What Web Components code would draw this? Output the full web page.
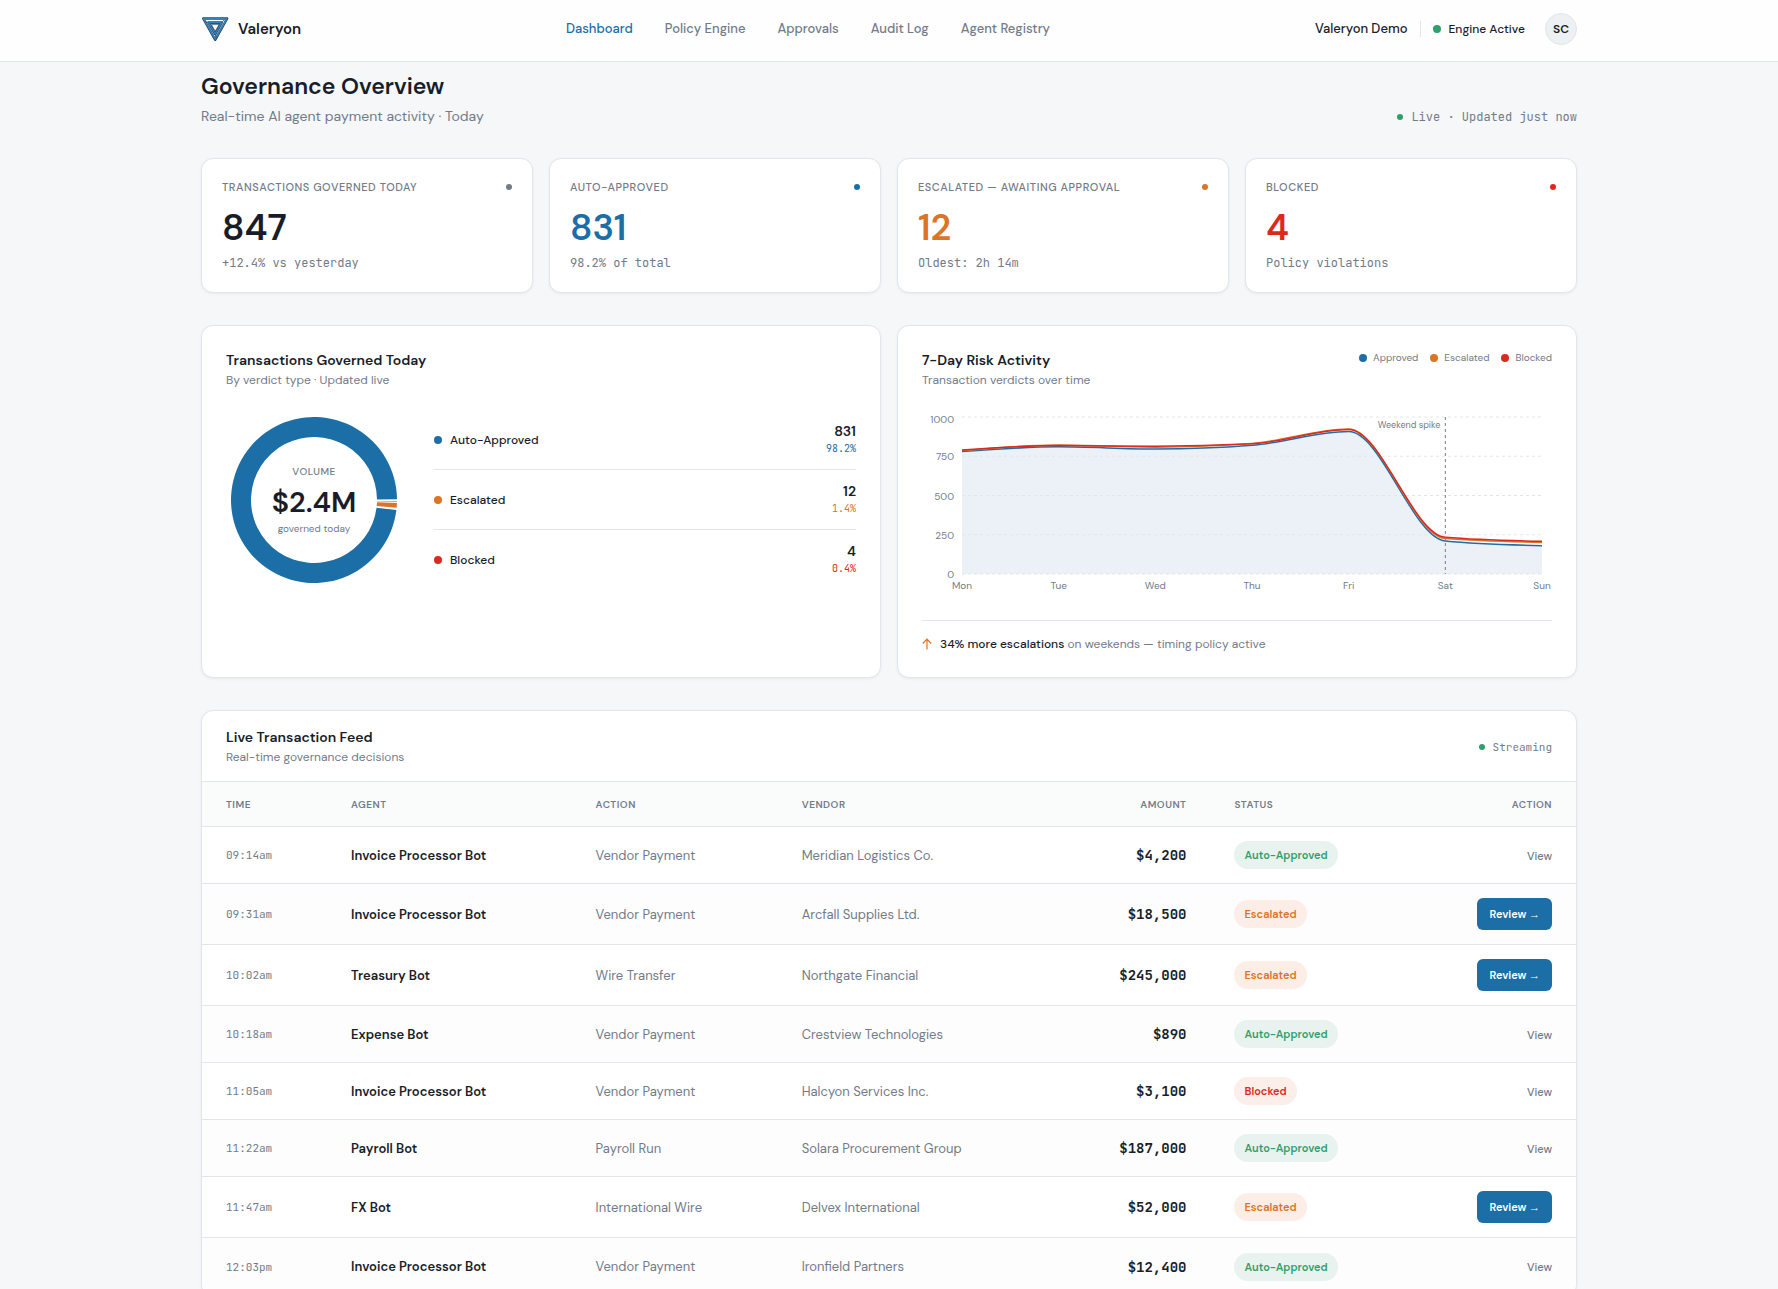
<!DOCTYPE html>
<html lang="en">
<head>
<meta charset="utf-8">
<title>Valeryon - Governance Overview</title>
<meta name="viewport" content="width=device-width, initial-scale=1">
<style>
:root {
  --ink: #181d29;
  --muted: #727b89;
  --line: #e2e6ea;
  --blue: #1c6ea7;
  --orange: #dc7427;
  --red: #dc291e;
  --green: #319e6b;
  --sans: "DM Sans", Inter, sans-serif;
  --mono: "JetBrains Mono", "DejaVu Sans Mono", monospace;
}

body {
  margin: 0;
  background: #f5f7f9;
  color: var(--ink);
  font-family: var(--sans);
  font-size: 14px;
}
</style>
</head>
<body>
<val-app></val-app>

<script>
function define (name, html, setup) {
  const template = document.createElement('template');
  template.innerHTML = html;

  customElements.define(name, class extends HTMLElement {
    constructor() {
      super();
      this.attachShadow({mode: 'open'});
      this.shadowRoot.appendChild(template.content.cloneNode(true));
    }

    connectedCallback() {
      if (setup && !this._ready) {
        this._ready = true;
        setup(this, this.shadowRoot);
      }
    }
  });
}

define('status-dot', `
<style>
:host {
  display: inline-block;
  flex: none;
  width: 6px;
  height: 6px;
  border-radius: 50%;
  background: var(--dot, var(--green));
}

:host([size="md"]) {
  width: 8px;
  height: 8px;
}
</style>
`);

define('val-logo', `
<style>
:host {
  display: flex;
  align-items: center;
  gap: 9px;
  font-size: 15px;
  line-height: 20px;
  font-weight: 600;
}

svg {
  display: block;
}
</style>
<svg width="28" height="28" viewBox="0 0 28 28" fill="none" stroke-linejoin="round" aria-hidden="true">
  <path d="M2.200 3.500H26.200L14.200 24.800Z" fill="#fff" stroke="#2f4257" stroke-width="2.400"/>
  <path d="M2.600 3.800H25.800L14.200 24.200Z" stroke="#2f86c4" stroke-width="1.400"/>
  <path d="M7.600 7.600H20.600L14.200 19Z" stroke="#2f4257" stroke-width="2.600"/>
  <path d="M7.600 7.600H20.600L14.200 19Z" stroke="#2f86c4" stroke-width="1.300"/>
  <path d="M10.400 9.600H18L14.200 16.200Z" fill="#fff" stroke="#2f4257" stroke-width=".7"/>
  <path d="M20.600 7.600L23.400 4.800M14.200 19L15.200 23M7.600 7.600L4.500 6.600" stroke="#2f4257" stroke-width=".8"/>
</svg>
<slot></slot>
`);

define('val-header', `
<style>
:host {
  display: block;
  flex: none;
  background: #fefefe;
  border-bottom: 1px solid var(--line);
}

.bar {
  display: flex;
  justify-content: space-between;
  align-items: center;
  max-width: 1376px;
  margin: 0 auto;
  padding: 13px 32px 16px;
  font-size: 13px;
  line-height: 20px;
  font-weight: 500;
}

nav {
  display: flex;
  gap: 32px;
}

a {
  color: var(--muted);
  text-decoration: none;
}

a[aria-current] {
  color: var(--blue);
}

.account, .engine {
  display: flex;
  align-items: center;
}

.engine {
  gap: 8px;
  margin: 0 20px 0 12px;
  padding-left: 12px;
  border-left: 1px solid var(--line);
  font-size: 12px;
  line-height: 16px;
}

button {
  width: 32px;
  height: 32px;
  padding: 0;
  border: 1px solid var(--line);
  border-radius: 50%;
  background: #edf1f3;
  color: var(--ink);
  font: 600 12px var(--sans);
}
</style>
<header class="bar">
  <val-logo>Valeryon</val-logo>
  <nav>
    <a href="#dashboard" aria-current="page">Dashboard</a>
    <a href="#policy">Policy Engine</a>
    <a href="#approvals">Approvals</a>
    <a href="#audit">Audit Log</a>
    <a href="#agents">Agent Registry</a>
  </nav>
  <div class="account">
    <span>Valeryon Demo</span>
    <span class="engine"><status-dot size="md"></status-dot>Engine Active</span>
    <button type="button">SC</button>
  </div>
</header>
`);

define('live-label', `
<style>
:host {
  display: flex;
  align-items: center;
  gap: 8px;
  color: var(--muted);
  font: 12px/18px var(--mono);
}

:host([small]) {
  font-size: 11px;
}
</style>
<status-dot></status-dot><span><slot></slot></span>
`);

define('page-title', `
<style>
:host {
  display: flex;
  justify-content: space-between;
  align-items: flex-end;
}

h1 {
  margin: 0;
  font-size: 23px;
  line-height: 32px;
  font-weight: 600;
}

p {
  margin: 4px 0 0;
  color: var(--muted);
  font-size: 14px;
  line-height: 20px;
}
</style>
<div>
  <h1><slot></slot></h1>
  <p><slot name="sub"></slot></p>
</div>
<slot name="side"></slot>
`);

define('val-card', `
<style>
:host {
  display: block;
  min-width: 0;
  background: #fff;
  border: 1px solid var(--line);
  border-radius: 12px;
  box-shadow: 0 1px 3px rgba(20, 40, 60, .06);
}

:host([pad]) {
  padding: 24px;
}

:host([clip]) {
  overflow: hidden;
}
</style>
<slot></slot>
`);

define('kpi-card', `
<style>
:host {
  display: block;
  color: var(--muted);
}

.in {
  padding: 20px;
}

.top {
  display: flex;
  justify-content: space-between;
  align-items: center;
  font-size: 11px;
  line-height: 16px;
  font-weight: 500;
  text-transform: uppercase;
  letter-spacing: .05em;
}

.value {
  margin: 14px 0 9px;
  color: var(--tone, var(--ink));
  font-size: 36px;
  line-height: 37px;
  font-weight: 600;
}

.note {
  font: 12px/17px var(--mono);
}

status-dot {
  --dot: var(--tone, var(--muted));
}
</style>
<val-card>
  <div class="in">
    <div class="top"><slot></slot><status-dot></status-dot></div>
    <div class="value"><slot name="value"></slot></div>
    <div class="note"><slot name="note"></slot></div>
  </div>
</val-card>
`);

define('card-heading', `
<style>
:host {
  display: flex;
  justify-content: space-between;
  align-items: flex-start;
}

:host([middle]) {
  align-items: center;
}

h2 {
  margin: 0;
  font-size: 14px;
  line-height: 21px;
  font-weight: 600;
}

p {
  margin: 0;
  color: var(--muted);
  font-size: 12px;
  line-height: 18px;
}
</style>
<div>
  <h2><slot></slot></h2>
  <p><slot name="sub"></slot></p>
</div>
<slot name="side"></slot>
`);

define('verdict-donut', `
<style>
:host {
  display: grid;
  place-items: center;
  width: 176px;
  height: 176px;
}

svg, .center {
  grid-area: 1 / 1;
}

.center {
  text-align: center;
  color: var(--muted);
}

.label {
  font-size: 10px;
  line-height: 16px;
  font-weight: 500;
  letter-spacing: .05em;
}

.total {
  padding: 6px 0 4px;
  color: var(--ink);
  font-size: 29px;
  line-height: 32px;
  font-weight: 600;
}

.foot {
  font-size: 10px;
  line-height: 14px;
}
</style>
<svg width="176" height="176" viewBox="0 0 176 176" aria-hidden="true"></svg>
<div class="center">
  <div class="label">VOLUME</div>
  <div class="total">$2.4M</div>
  <div class="foot">governed today</div>
</div>
`, (el, root) => {
  // angles in degrees, clockwise from three o'clock
  const slices = [
    {from: 7, to: 359.5, color: 'var(--blue)'},
    {from: 2, to: 5.4, color: 'var(--orange)'},
    {from: 0.9, to: 1.2, color: 'var(--red)'}
  ];
  const point = (r, deg) => {
    const a = deg * Math.PI / 180;
    return `${(88 + r * Math.cos(a)).toFixed(2)} ${(88 + r * Math.sin(a)).toFixed(2)}`;
  };
  root.querySelector('svg').innerHTML = slices.map(({from, to, color}) => {
    const large = to - from > 180 ? 1 : 0;
    return `<path style="fill:${color}" d="M${point(83, from)}A83 83 0 ${large} 1 ${point(83, to)}L${point(63, to)}A63 63 0 ${large} 0 ${point(63, from)}Z"/>`;
  }).join('');
});

define('verdict-row', `
<style>
:host {
  display: flex;
  justify-content: space-between;
  align-items: center;
  height: 59px;
  border-bottom: 1px solid var(--line);
}

:host(:last-of-type) {
  border-bottom: 0;
}

.name {
  display: flex;
  align-items: center;
  gap: 8px;
  font-size: 12px;
  font-weight: 500;
}

.num {
  text-align: right;
  font-size: 14px;
  line-height: 19px;
  font-weight: 600;
}

.pct {
  color: var(--tone);
  font: 10px/16px var(--mono);
}

status-dot {
  --dot: var(--tone);
}
</style>
<span class="name"><status-dot size="md"></status-dot><span><slot></slot></span></span>
<div class="num">
  <slot name="count"></slot>
  <div class="pct"><slot name="share"></slot></div>
</div>
`);

define('chart-legend', `
<style>
:host {
  display: flex;
  gap: 12px;
  color: var(--muted);
  font-size: 10px;
  line-height: 15px;
}

span {
  display: flex;
  align-items: center;
  gap: 6px;
}
</style>
<span><status-dot size="md" style="--dot: var(--blue)"></status-dot>Approved</span>
<span><status-dot size="md" style="--dot: var(--orange)"></status-dot>Escalated</span>
<span><status-dot size="md" style="--dot: var(--red)"></status-dot>Blocked</span>
`);

define('risk-chart', `
<style>
:host {
  display: block;
}

svg {
  display: block;
  width: 100%;
  height: auto;
}

text {
  fill: var(--muted);
  font-family: var(--sans);
  font-size: 10px;
}

.grid {
  stroke: #e3e6e9;
  stroke-dasharray: 3 3;
}

.marker {
  stroke: #777d86;
  stroke-dasharray: 3 3;
}
</style>
<svg viewBox="0 0 630 190" role="img" aria-label="Transaction verdicts over seven days"></svg>
`, (el, root) => {
  const days = ['Mon', 'Tue', 'Wed', 'Thu', 'Fri', 'Sat', 'Sun'];
  const left = 40, right = 620, top = 4, bottom = 161;
  const x = i => left + i * (right - left) / 6;
  const y = v => bottom - v * (bottom - top) / 1000;

  const series = [
    {color: 'var(--blue)', width: 1.5, values: [780, 810, 796, 820, 907, 210, 180]},
    {color: 'var(--orange)', width: 1.5, values: [786, 822, 808, 832, 924, 226, 201]},
    {color: 'var(--red)', width: 1.5, values: [790, 818, 814, 829, 920, 234, 208]}
  ];

  // monotone cubic, so the curve never overshoots a data point
  function curve (values) {
    const p = values.map((v, i) => [x(i), y(v)]);
    const n = p.length;
    const s = [];
    for (let i = 0; i < n - 1; i++) {
      s.push((p[i + 1][1] - p[i][1]) / (p[i + 1][0] - p[i][0]));
    }
    const m = [];
    for (let i = 1; i < n - 1; i++) {
      m[i] = (Math.sign(s[i - 1]) + Math.sign(s[i])) *
        Math.min(Math.abs(s[i - 1]), Math.abs(s[i]), Math.abs(s[i - 1] + s[i]) / 4) || 0;
    }
    m[0] = (3 * s[0] - m[1]) / 2;
    m[n - 1] = (3 * s[n - 2] - m[n - 2]) / 2;
    let d = `M${p[0][0]} ${p[0][1]}`;
    for (let i = 0; i < n - 1; i++) {
      const h = (p[i + 1][0] - p[i][0]) / 3;
      d += `C${p[i][0] + h} ${p[i][1] + h * m[i]} ${p[i + 1][0] - h} ${p[i + 1][1] - h * m[i + 1]} ${p[i + 1][0]} ${p[i + 1][1]}`;
    }
    return d;
  }

  let out = `<path d="${curve(series[0].values)}V${bottom}H${left}Z" fill="#ecf1f8"/>`;
  [0, 250, 500, 750, 1000].forEach(v => {
    const ty = v === 1000 ? y(v) + 6 : y(v) + 4;
    out += `<path class="grid" d="M${left} ${y(v)}H${right}"/>`;
    out += `<text x="32" y="${ty}" text-anchor="end">${v}</text>`;
  });
  days.forEach((day, i) => {
    out += `<text x="${x(i)}" y="176" text-anchor="middle">${day}</text>`;
  });
  series.forEach(({color, width, values}) => {
    out += `<path d="${curve(values)}" fill="none" style="stroke:${color}" stroke-width="${width}"/>`;
  });
  out += `<path class="marker" d="M${x(5)} ${top}V${bottom}"/>`;
  out += `<text x="${x(5) - 5}" y="15" text-anchor="end" style="font-size:9px">Weekend spike</text>`;
  root.querySelector('svg').innerHTML = out;
});

define('transaction-feed', `
<style>
:host {
  display: block;
}

card-heading {
  padding: 16px 24px 15px;
}

table {
  width: 100%;
  border-collapse: separate;
  border-spacing: 0;
  table-layout: fixed;
}

th, td {
  box-sizing: border-box;
  padding: 0 24px;
  text-align: left;
  border-bottom: 1px solid var(--line);
  white-space: nowrap;
}

th {
  height: 46px;
  border-top: 1px solid var(--line);
  background: #fafcfc;
  color: var(--muted);
  font-size: 10px;
  font-weight: 600;
  letter-spacing: .05em;
}

td {
  height: 57px;
  color: var(--muted);
  font-size: 13px;
}

tr.review td {
  height: 61px;
}

tbody tr:nth-child(even) td {
  background: #fdfdfd;
}

tbody tr:last-child td {
  border-bottom: 0;
}

.time {
  font-family: var(--mono);
  font-size: 11px;
}

.agent {
  color: var(--ink);
  font-weight: 600;
}

.num, .act {
  text-align: right;
}

td.num {
  color: var(--ink);
  font: 600 14px var(--mono);
}

.pill {
  display: inline-block;
  padding: 0 10px;
  border-radius: 14px;
  font-size: 11px;
  line-height: 28px;
  font-weight: 600;
}

.auto-approved {
  background: #e8f2ee;
  color: var(--green);
}

.escalated {
  background: #fceee7;
  color: var(--orange);
}

.blocked {
  background: #fceee9;
  color: var(--red);
}

button {
  padding: 0;
  border: 0;
  background: none;
  color: var(--muted);
  font: 500 11px/16px var(--sans);
}

.review button {
  height: 32px;
  padding: 0 12px;
  border-radius: 6px;
  background: var(--blue);
  color: #fff;
  font-weight: 600;
}

.arrow {
  font-family: "Liberation Sans", sans-serif;
  font-weight: 400;
}
</style>
<card-heading middle>
  Live Transaction Feed
  <span slot="sub">Real-time governance decisions</span>
  <live-label small slot="side">Streaming</live-label>
</card-heading>
<table>
  <colgroup>
    <col style="width: 9.1%"><col style="width: 17.8%"><col style="width: 15%"><col style="width: 21.8%">
    <col style="width: 9.7%"><col style="width: 14%"><col>
  </colgroup>
  <thead>
    <tr><th>TIME</th><th>AGENT</th><th>ACTION</th><th>VENDOR</th><th class="num">AMOUNT</th><th>STATUS</th><th class="act">ACTION</th></tr>
  </thead>
  <tbody></tbody>
</table>
`, (el, root) => {
  const rows = [
    ['09:14am', 'Invoice Processor Bot', 'Vendor Payment', 'Meridian Logistics Co.', '$4,200', 'Auto-Approved'],
    ['09:31am', 'Invoice Processor Bot', 'Vendor Payment', 'Arcfall Supplies Ltd.', '$18,500', 'Escalated'],
    ['10:02am', 'Treasury Bot', 'Wire Transfer', 'Northgate Financial', '$245,000', 'Escalated'],
    ['10:18am', 'Expense Bot', 'Vendor Payment', 'Crestview Technologies', '$890', 'Auto-Approved'],
    ['11:05am', 'Invoice Processor Bot', 'Vendor Payment', 'Halcyon Services Inc.', '$3,100', 'Blocked'],
    ['11:22am', 'Payroll Bot', 'Payroll Run', 'Solara Procurement Group', '$187,000', 'Auto-Approved'],
    ['11:47am', 'FX Bot', 'International Wire', 'Delvex International', '$52,000', 'Escalated'],
    ['12:03pm', 'Invoice Processor Bot', 'Vendor Payment', 'Ironfield Partners', '$12,400', 'Auto-Approved']
  ];
  root.querySelector('tbody').innerHTML = rows.map(([time, agent, action, vendor, amount, status]) => {
    const review = status === 'Escalated';
    return `<tr class="${review ? 'review' : ''}">
      <td class="time">${time}</td>
      <td class="agent">${agent}</td>
      <td>${action}</td>
      <td>${vendor}</td>
      <td class="num">${amount}</td>
      <td><span class="pill ${status.toLowerCase()}">${status}</span></td>
      <td class="act"><button type="button">${review ? 'Review <span class="arrow">→</span>' : 'View'}</button></td>
    </tr>`;
  }).join('');
});

define('val-app', `
<style>
:host {
  display: flex;
  flex-direction: column;
  height: 100vh;
}

main {
  flex: 1;
  min-height: 0;
  overflow-y: auto;
  scrollbar-width: none;
}

.page {
  display: flex;
  flex-direction: column;
  gap: 32px;
  max-width: 1376px;
  margin: 0 auto;
  padding: 8px 32px 48px;
}

.kpis, .charts {
  display: grid;
  grid-template-columns: repeat(4, minmax(0, 1fr));
  gap: 16px;
}

.charts {
  grid-template-columns: repeat(2, minmax(0, 1fr));
}

.verdicts {
  display: flex;
  align-items: center;
  gap: 32px;
  margin-top: 21px;
}

.list {
  flex: 1;
}

risk-chart {
  margin-top: 24px;
}

.insight {
  display: flex;
  gap: 8px;
  margin-top: 17px;
  padding-top: 14px;
  border-top: 1px solid var(--line);
  color: var(--muted);
  font-size: 12px;
  line-height: 18px;
}

.insight svg {
  flex: none;
  margin-top: 3px;
}

strong {
  color: var(--ink);
  font-weight: 500;
}
</style>
<val-header></val-header>
<main>
  <div class="page">
    <page-title>
      Governance Overview
      <span slot="sub">Real-time AI agent payment activity · Today</span>
      <live-label slot="side">Live · Updated just now</live-label>
    </page-title>

    <section class="kpis">
      <kpi-card>Transactions Governed Today<span slot="value">847</span><span slot="note">+12.4% vs yesterday</span></kpi-card>
      <kpi-card style="--tone: var(--blue)">Auto-Approved<span slot="value">831</span><span slot="note">98.2% of total</span></kpi-card>
      <kpi-card style="--tone: var(--orange)">Escalated — Awaiting Approval<span slot="value">12</span><span slot="note">Oldest: 2h 14m</span></kpi-card>
      <kpi-card style="--tone: var(--red)">Blocked<span slot="value">4</span><span slot="note">Policy violations</span></kpi-card>
    </section>

    <section class="charts">
      <val-card pad>
        <card-heading>Transactions Governed Today<span slot="sub">By verdict type · Updated live</span></card-heading>
        <div class="verdicts">
          <verdict-donut></verdict-donut>
          <div class="list">
            <verdict-row style="--tone: var(--blue)">Auto-Approved<span slot="count">831</span><span slot="share">98.2%</span></verdict-row>
            <verdict-row style="--tone: var(--orange)">Escalated<span slot="count">12</span><span slot="share">1.4%</span></verdict-row>
            <verdict-row style="--tone: var(--red)">Blocked<span slot="count">4</span><span slot="share">0.4%</span></verdict-row>
          </div>
        </div>
      </val-card>
      <val-card pad>
        <card-heading>
          7-Day Risk Activity
          <span slot="sub">Transaction verdicts over time</span>
          <chart-legend slot="side"></chart-legend>
        </card-heading>
        <risk-chart></risk-chart>
        <div class="insight">
          <svg width="10" height="12" viewBox="0 0 10 12" fill="none" stroke="#dc7427" stroke-width="1.200" aria-hidden="true">
            <path d="M5 11.500V1.500M.8 5.500L5 1.200L9.200 5.500"/>
          </svg>
          <span><strong>34% more escalations</strong> on weekends — timing policy active</span>
        </div>
      </val-card>
    </section>

    <val-card clip>
      <transaction-feed></transaction-feed>
    </val-card>
  </div>
</main>
`);
</script>
</body>
</html>
